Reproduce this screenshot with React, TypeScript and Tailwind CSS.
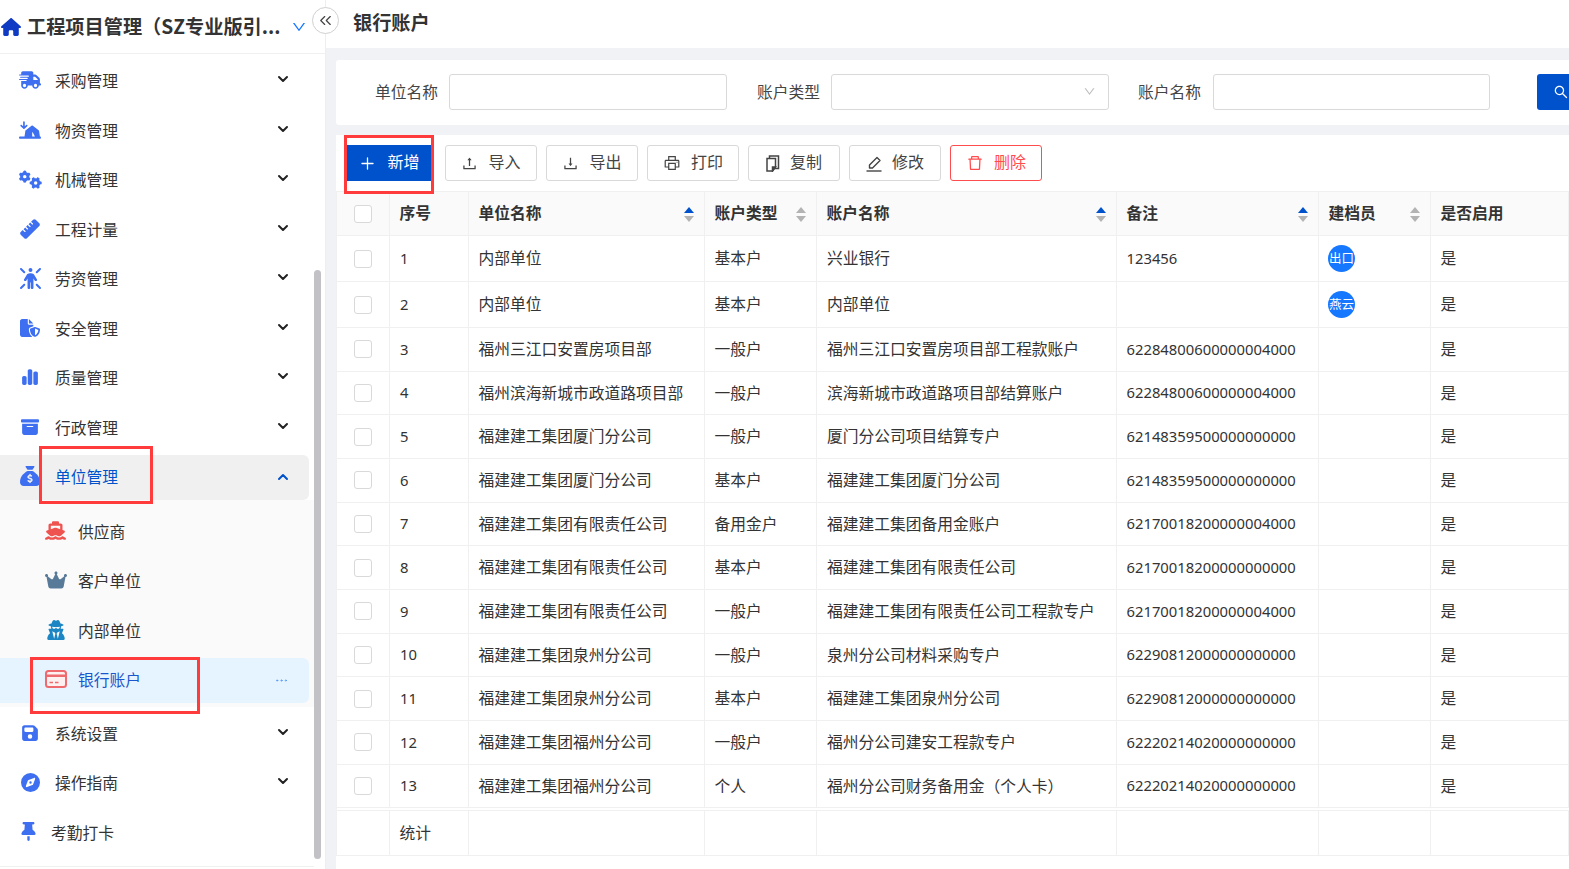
import { FC, ReactNode } from 'react';
import { ChevronDown, ChevronUp, ChevronsLeft, Ellipsis, Plus } from 'lucide-react';
import {
  AiOutlineDelete,
  AiOutlineDown,
  AiOutlineDownload,
  AiOutlinePrinter,
  AiOutlineSearch,
  AiOutlineUpload,
} from 'react-icons/ai';
import {
  FaBoxArchive,
  FaChartSimple,
  FaCompass,
  FaCrown,
  FaFileShield,
  FaFloppyDisk,
  FaGears,
  FaHouse,
  FaPersonRays,
  FaRuler,
  FaSackDollar,
  FaShip,
  FaTentArrowDownToLine,
  FaThumbtack,
  FaTruckFast,
  FaUserSecret,
} from 'react-icons/fa6';

const fontStack = 'font-["Noto_Sans_CJK_SC","Noto_Sans",sans-serif]';
const numFont = 'font-["Noto_Sans",sans-serif] text-[14.8px]';
const gridCols = 'grid grid-cols-[53px_79px_236px_112px_300px_202px_112px_138px]';
const cellLine = 'border-r border-b border-[#f0f0f0] flex items-center';
const textCell = `${cellLine} whitespace-nowrap pb-[1px]`;

const CardIcon: FC = () => (
  <svg width="22" height="18" viewBox="0 0 22 18" className="text-[#ee6a6e]">
    <rect x="1" y="1" width="20" height="16" rx="2.5" fill="#fdf0f1" stroke="currentColor" strokeWidth="2" />
    <rect x="1" y="4.5" width="20" height="2.5" fill="currentColor" />
    <path d="M4.5 12.5H8M10 12.5H13.5" stroke="currentColor" strokeWidth="1.6" />
  </svg>
);

const CopyIcon: FC = () => (
  <svg width="14" height="17" viewBox="0 0 14 17" fill="none" stroke="currentColor" strokeWidth="1.5">
    <path d="M1 3.5H9.5V12L6.5 16H1Z" />
    <path d="M3.5 3.5V1H12.5V13.5H9" />
    <path d="M6.5 16V12H9.5Z" fill="currentColor" />
  </svg>
);

const EditIcon: FC = () => (
  <svg width="16" height="17" viewBox="0 0 16 17" fill="none" stroke="currentColor" strokeWidth="1.4">
    <path d="M0.5 16H15.5" />
    <path d="M3.5 13V10L11 2.5L14 5.5L6.5 13Z" strokeLinejoin="round" />
  </svg>
);

const menuTop = [
  { label: '采购管理', icon: <FaTruckFast size={22} /> },
  { label: '物资管理', icon: <FaTentArrowDownToLine size={22} /> },
  { label: '机械管理', icon: <FaGears size={23} /> },
  { label: '工程计量', icon: <FaRuler size={20} /> },
  { label: '劳资管理', icon: <FaPersonRays size={21} /> },
  { label: '安全管理', icon: <FaFileShield size={20} /> },
  { label: '质量管理', icon: <FaChartSimple size={18} /> },
  { label: '行政管理', icon: <FaBoxArchive size={18} /> },
];

const subMenu = [
  { label: '供应商', icon: <FaShip size={21} className="text-[#ef5350]" /> },
  { label: '客户单位', icon: <FaCrown size={22} className="text-[#587a99]" /> },
  { label: '内部单位', icon: <FaUserSecret size={20} className="text-[#1c86c4]" /> },
  { label: '银行账户', icon: <CardIcon />, active: true },
];

const rows = [
  ['1', '内部单位', '基本户', '兴业银行', '123456', '出口'],
  ['2', '内部单位', '基本户', '内部单位', '', '燕云'],
  ['3', '福州三江口安置房项目部', '一般户', '福州三江口安置房项目部工程款账户', '62284800600000004000', ''],
  ['4', '福州滨海新城市政道路项目部', '一般户', '滨海新城市政道路项目部结算账户', '62284800600000004000', ''],
  ['5', '福建建工集团厦门分公司', '一般户', '厦门分公司项目结算专户', '62148359500000000000', ''],
  ['6', '福建建工集团厦门分公司', '基本户', '福建建工集团厦门分公司', '62148359500000000000', ''],
  ['7', '福建建工集团有限责任公司', '备用金户', '福建建工集团备用金账户', '62170018200000004000', ''],
  ['8', '福建建工集团有限责任公司', '基本户', '福建建工集团有限责任公司', '62170018200000000000', ''],
  ['9', '福建建工集团有限责任公司', '一般户', '福建建工集团有限责任公司工程款专户', '62170018200000004000', ''],
  ['10', '福建建工集团泉州分公司', '一般户', '泉州分公司材料采购专户', '62290812000000000000', ''],
  ['11', '福建建工集团泉州分公司', '基本户', '福建建工集团泉州分公司', '62290812000000000000', ''],
  ['12', '福建建工集团福州分公司', '一般户', '福州分公司建安工程款专户', '62220214020000000000', ''],
  ['13', '福建建工集团福州分公司', '个人', '福州分公司财务备用金（个人卡）', '62220214020000000000', ''],
];

const MenuItem: FC<{ label: string; icon: ReactNode; active?: boolean }> = ({ label, icon, active }) => (
  <div className={`flex h-[45px] w-[309px] items-center rounded-r-md ${active ? 'bg-[#f0f0f0] text-[#0052cc]' : 'text-[#333]'}`}>
    <span className="flex w-[60px] shrink-0 justify-center text-[#3d6ff0] -translate-y-px">{icon}</span>
    <span className="-ml-[5px] flex-1 text-[15.75px]">{label}</span>
    {active ? (
      <ChevronUp size={16} strokeWidth={3} className="mr-[18px] text-[#0052cc]" />
    ) : (
      <ChevronDown size={16} strokeWidth={3} className="mr-[18px] -translate-y-[2px] text-[#222]" />
    )}
  </div>
);

const Sidebar: FC = () => (
  <aside className="relative flex h-full w-[326px] shrink-0 flex-col border-r border-[#eeeef0] bg-white">
    <div className="flex h-[54px] shrink-0 items-center border-b border-[#f0f0f0] pl-[1px]">
      <FaHouse size={20} className="shrink-0 text-[#0f3ac4]" />
      <span className="ml-[6px] w-[257px] whitespace-nowrap text-[19.2px] font-semibold text-[#333]">工程项目管理（SZ专业版引...</span>
      <AiOutlineDown size={16} className="ml-[7px] text-[#1677ff]" />
    </div>
    <nav className="flex flex-col gap-[4.5px] pt-[4.5px]">
      {menuTop.map((m) => (
        <MenuItem key={m.label} label={m.label} icon={m.icon} />
      ))}
      <MenuItem label="单位管理" active icon={<FaSackDollar size={20} />} />
      <div className="-mt-[4.5px] flex w-[314px] flex-col gap-[4.5px] bg-[#fafafa] pb-[4px] pt-[9.5px]">
        {subMenu.map((s) => (
          <div key={s.label} className={`flex h-[45px] w-[309px] items-center rounded-r-md ${s.active ? 'bg-[#e6f4ff] text-[#1a56cc]' : 'text-[#333]'}`}>
            <span className="ml-[40px] flex w-[31px] shrink-0 justify-center -translate-y-px">{s.icon}</span>
            <span className="ml-[7px] flex-1 text-[15.75px]">{s.label}</span>
            {s.active && <Ellipsis size={15} strokeWidth={1.5} className="mr-[20px] text-[#5b9bf5]" />}
          </div>
        ))}
      </div>
      <MenuItem label="系统设置" icon={<FaFloppyDisk size={18} />} />
      <MenuItem label="操作指南" icon={<FaCompass size={19} />} />
      <div className="flex h-[45px] w-[309px] items-center text-[#333]">
        <span className="flex w-[56px] shrink-0 justify-center text-[#3d6ff0] -translate-y-px">
          <FaThumbtack size={19} />
        </span>
        <span className="-ml-[5px] text-[15.75px]">考勤打卡</span>
      </div>
    </nav>
    <div className="absolute left-[314px] top-[270px] h-[589px] w-[7px] rounded-full bg-[#c1c1c6]" />
    <div className="absolute bottom-[2px] left-0 h-px w-[314px] bg-[#f0f0f0]" />
  </aside>
);

const ToolButton: FC<{ icon: ReactNode; label: string; tone?: 'primary' | 'danger' }> = ({ icon, label, tone }) => {
  const toneClass =
    tone === 'primary'
      ? 'w-[90px] mr-[2px] bg-[#0052cc] border-[#0052cc] text-white'
      : tone === 'danger'
        ? 'w-[92px] bg-white border-[#ff4d4f] text-[#ff4d4f]'
        : 'w-[92px] bg-white border-[#d9d9d9] text-[#444]';
  return (
    <button className={`flex h-[36px] items-center justify-center gap-[10px] rounded-[3px] border text-[16px] ${toneClass}`}>
      {icon}
      <span className="-translate-y-[2px]">{label}</span>
    </button>
  );
};

const SortCaret: FC<{ active?: boolean }> = ({ active }) => (
  <svg width="10" height="15" viewBox="0 0 10 15" className="shrink-0 translate-y-px">
    <polygon points="5,0 10,6 0,6" fill={active ? '#0052cc' : '#b3b3b3'} />
    <polygon points="5,15 10,9 0,9" fill="#b3b3b3" />
  </svg>
);

const Checkbox: FC = () => <span className="block h-[18px] w-[18px] rounded-[3px] border border-[#d9d9d9] bg-white" />;

const HeadCell: FC<{ label: string; sort?: boolean; active?: boolean }> = ({ label, sort, active }) => (
  <div className={`${textCell} justify-between pl-[9.5px] pr-[10px] text-[15.75px] font-semibold text-[#333]`}>
    <span>{label}</span>
    {sort && <SortCaret active={active} />}
  </div>
);

const Field: FC<{ label: string; labelClass: string; inputW?: string; select?: boolean }> = ({ label, labelClass, inputW = 'w-[278px]', select }) => (
  <div className="flex items-center">
    <label className={`${labelClass} text-right text-[15.75px] text-[#444]`}>{label}</label>
    <div className={`flex h-[36px] ${inputW} items-center justify-end rounded-[3px] border border-[#d9d9d9] bg-white pr-[12px]`}>
      {select && <AiOutlineDown size={13} className="text-[#bdbdbd]" />}
    </div>
  </div>
);

const App: FC = () => (
  <div className={`relative flex h-screen w-screen overflow-hidden bg-white ${fontStack}`}>
    <Sidebar />
    <main className="flex h-full min-w-0 flex-1 flex-col bg-[#f0f2f5]">
      <header className="flex h-[48px] shrink-0 items-center bg-white pb-[4px] pl-[27px] text-[19.2px] font-semibold text-[#333]">银行账户</header>
      <div className="flex-1 pl-[10px] pt-[12px]">
        <section className="flex h-[65px] items-center rounded-l-[3px] bg-white pb-[2px]">
          <Field label="单位名称" labelClass="w-[102px] mr-[11px]" />
          <Field label="账户类型" labelClass="w-[93px] mr-[11px]" select />
          <Field label="账户名称" labelClass="w-[92px] mr-[12px]" inputW="w-[277px]" />
          <button className="ml-[47px] flex h-[36px] w-[80px] shrink-0 items-center rounded-[3px] bg-[#0052cc] pl-[16px] text-white">
            <AiOutlineSearch size={16} />
          </button>
        </section>
        <section className="mt-[10px] h-[734px] bg-white">
          <div className="flex h-[56px] items-start gap-[9px] pl-[8px] pt-[10px]">
            <ToolButton tone="primary" label="新增" icon={<Plus size={19} strokeWidth={1.6} />} />
            <ToolButton label="导入" icon={<AiOutlineUpload size={17} />} />
            <ToolButton label="导出" icon={<AiOutlineDownload size={17} />} />
            <ToolButton label="打印" icon={<AiOutlinePrinter size={18} />} />
            <ToolButton label="复制" icon={<CopyIcon />} />
            <ToolButton label="修改" icon={<EditIcon />} />
            <ToolButton tone="danger" label="删除" icon={<AiOutlineDelete size={18} />} />
          </div>
          <div className="border-l border-t border-[#f0f0f0] text-[15.75px] text-[#333]">
            <div className={`${gridCols} h-[44px] bg-[#fafafa]`}>
              <div className={`${cellLine} justify-center`}>
                <Checkbox />
              </div>
              <HeadCell label="序号" />
              <HeadCell label="单位名称" sort active />
              <HeadCell label="账户类型" sort />
              <HeadCell label="账户名称" sort active />
              <HeadCell label="备注" sort active />
              <HeadCell label="建档员" sort />
              <HeadCell label="是否启用" />
            </div>
            {rows.map((r, i) => (
              <div key={r[0]} className={`${gridCols} ${i < 2 ? 'h-[46px]' : 'h-[43.67px]'}`}>
                <div className={`${cellLine} justify-center`}>
                  <Checkbox />
                </div>
                <div className={`${textCell} pl-[10px] ${numFont}`}>{r[0]}</div>
                <div className={`${textCell} pl-[9.5px]`}>{r[1]}</div>
                <div className={`${textCell} pl-[9.5px]`}>{r[2]}</div>
                <div className={`${textCell} pl-[10px]`}>{r[3]}</div>
                <div className={`${textCell} pl-[9.5px] ${numFont}`}>{r[4]}</div>
                <div className={`${cellLine} pl-[9px]`}>
                  {r[5] && (
                    <span className="flex h-[27px] w-[27px] items-center justify-center rounded-full bg-[#1677ff] text-[12.5px] text-white">{r[5]}</span>
                  )}
                </div>
                <div className={`${textCell} pl-[9.5px]`}>是</div>
              </div>
            ))}
            <div className={`${gridCols} mt-[2px] h-[46px] border-t border-[#f0f0f0]`}>
              <div className={cellLine} />
              <div className={`${textCell} pl-[9.5px]`}>统计</div>
              <div className={cellLine} />
              <div className={cellLine} />
              <div className={cellLine} />
              <div className={cellLine} />
              <div className={cellLine} />
              <div className={cellLine} />
            </div>
          </div>
        </section>
      </div>
    </main>

    {/* collapse toggle */}
    <button className="absolute left-[312px] top-[7px] flex h-[27px] w-[27px] items-center justify-center rounded-full border border-[#d0d0d0] bg-white text-[#444]">
      <ChevronsLeft size={19} strokeWidth={1.5} />
    </button>

    {/* red annotation boxes drawn over the shot */}
    <div className="pointer-events-none absolute left-[344px] top-[135px] h-[59px] w-[90px] border-[3px] border-[#ff3b3b]" />
    <div className="pointer-events-none absolute left-[39px] top-[446px] h-[58px] w-[114px] border-[3px] border-[#ff3b3b]" />
    <div className="pointer-events-none absolute left-[30px] top-[657px] h-[57px] w-[170px] border-[3px] border-[#ff3b3b]" />
  </div>
);

export default App;
